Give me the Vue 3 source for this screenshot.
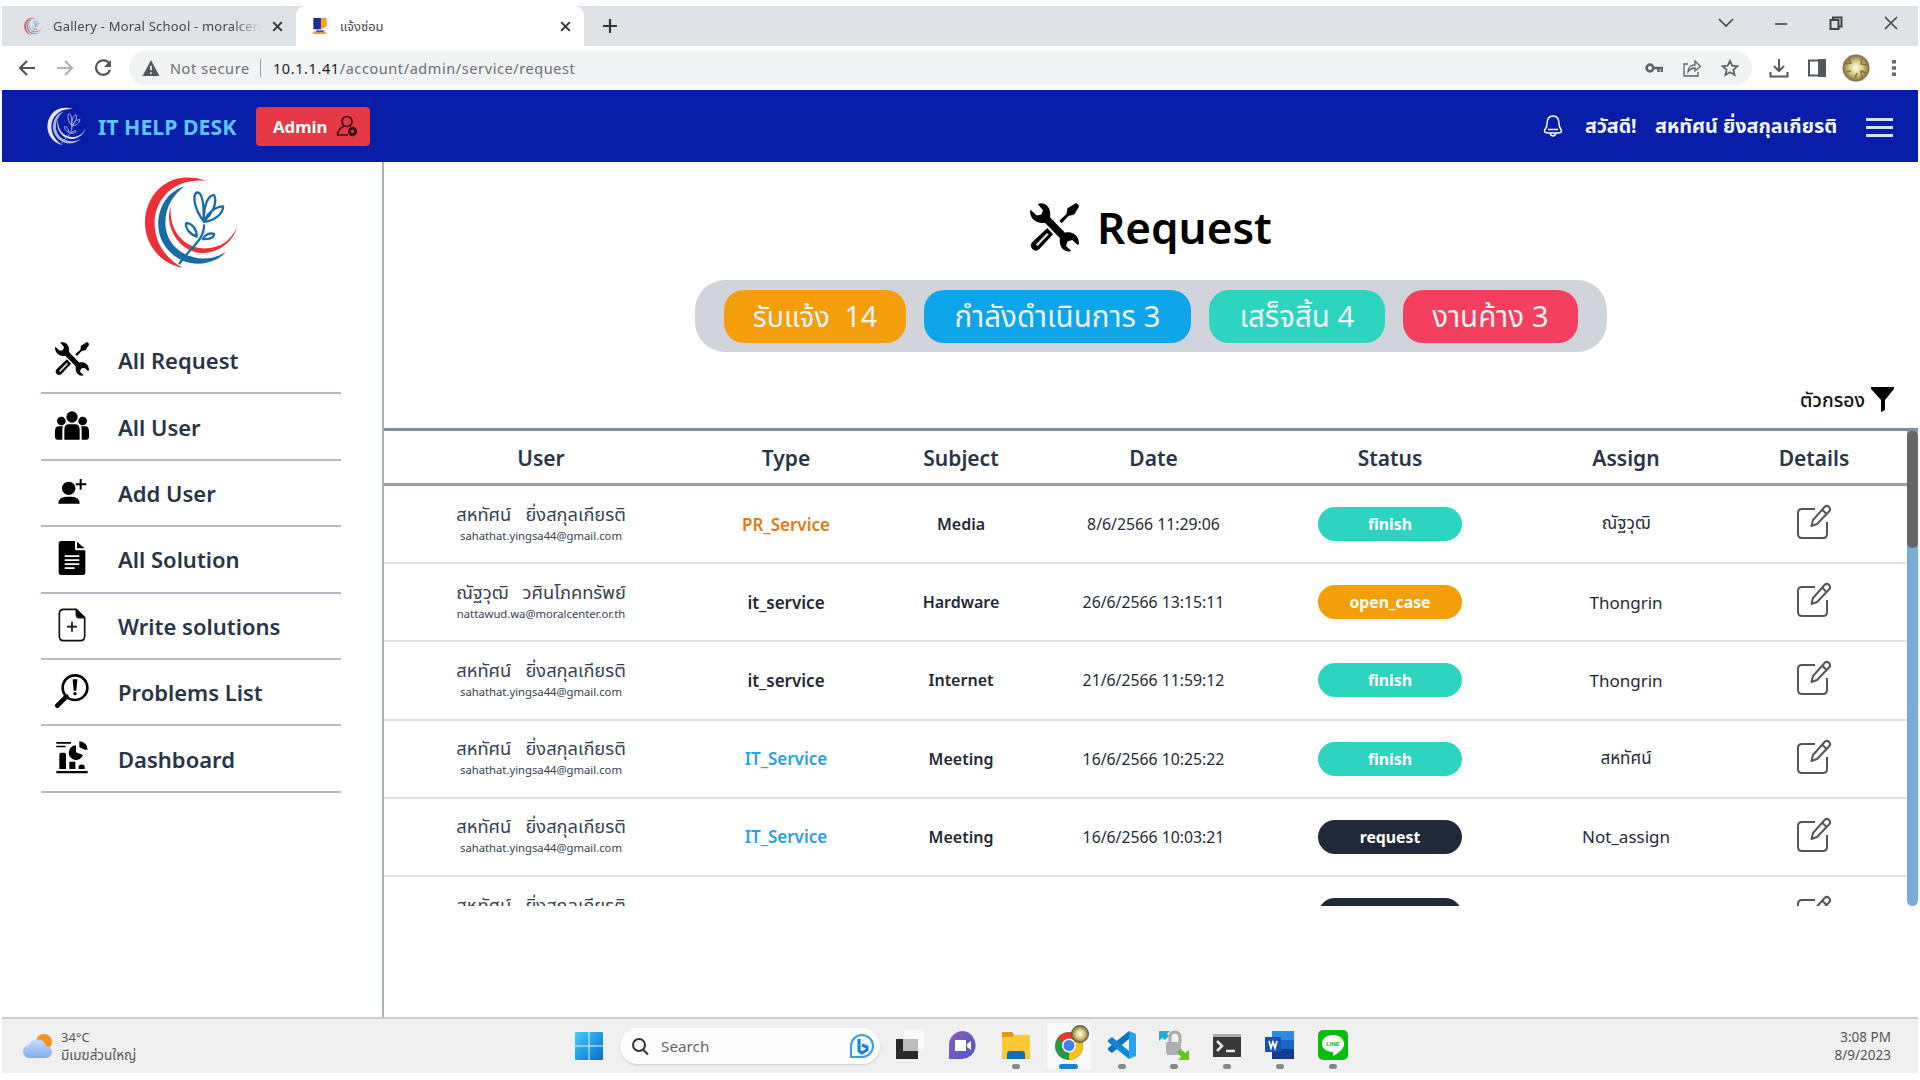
<script setup>
const menu = [
  { label: 'All Request', icon: 'tools' },
  { label: 'All User', icon: 'users' },
  { label: 'Add User', icon: 'useradd' },
  { label: 'All Solution', icon: 'file' },
  { label: 'Write solutions', icon: 'fileadd' },
  { label: 'Problems List', icon: 'problem' },
  { label: 'Dashboard', icon: 'dash' },
]
const counters = [
  { label: 'รับแจ้ง\u00a0 14', cls: 'amber' },
  { label: 'กำลังดำเนินการ 3', cls: 'sky' },
  { label: 'เสร็จสิ้น 4', cls: 'teal' },
  { label: 'งานค้าง 3', cls: 'rose' },
]
const columns = ['User', 'Type', 'Subject', 'Date', 'Status', 'Assign', 'Details']
const saha = { name: 'สหทัศน์\u00a0\u00a0 ยิ่งสกุลเกียรติ', mail: 'sahathat.yingsa44@gmail.com' }
const rows = [
  { ...saha, type: 'PR_Service', tc: 'pr', subject: 'Media', date: '8/6/2566 11:29:06', status: 'finish', assign: 'ณัฐวุฒิ' },
  { name: 'ณัฐวุฒิ\u00a0\u00a0 วศินโภคทรัพย์', mail: 'nattawud.wa@moralcenter.or.th', type: 'it_service', tc: 'plain', subject: 'Hardware', date: '26/6/2566 13:15:11', status: 'open_case', assign: 'Thongrin' },
  { ...saha, type: 'it_service', tc: 'plain', subject: 'Internet', date: '21/6/2566 11:59:12', status: 'finish', assign: 'Thongrin' },
  { ...saha, type: 'IT_Service', tc: 'it', subject: 'Meeting', date: '16/6/2566 10:25:22', status: 'finish', assign: 'สหทัศน์' },
  { ...saha, type: 'IT_Service', tc: 'it', subject: 'Meeting', date: '16/6/2566 10:03:21', status: 'request', assign: 'Not_assign' },
  { name: saha.name, mail: '', type: '', tc: 'it', subject: '', date: '', status: 'request', label: '', assign: '' },
]
</script>

<template>
  <svg class="sprite" aria-hidden="true">
    <symbol id="logo" viewBox="430 48 285 285">
      <path fill="var(--a)" d="M621 63C500 22 433 110 433 190c0 65 47 125 114 136C490 295 462 245 462 190 462 120 520 52 621 63z" />
      <path fill="var(--b)" d="M552 80c-52 15-79 65-79 115 0 65 57 120 122 119 40-1 70-19 84-36-29 19-59 22-84 19-55-7-100-47-100-107 0-50 25-85 57-110z" />
      <path fill="var(--a)" d="M511 140c-21 60 24 140 97 142 57-2 97-42 103-79-16 42-51 65-99 65-62-3-107-53-101-128z" />
      <g fill="none" stroke="var(--b)" stroke-width="7" stroke-linecap="round" stroke-linejoin="round">
        <path d="M611 186c-30-40-34-80-21-88 18-2 22 40 21 88zM612 186c-4-46 13-80 30-81 13 25-7 58-30 81zM613 187c8-28 36-47 57-47 0 25-28 43-57 47zM612 198c0 45-42 67-74 115" />
        <path d="M590 232c-20-6-36-26-32-41 17 0 32 18 32 41zM608 239c6-13 21-20 35-15-2 14-20 17-35 15z" />
      </g>
    </symbol>
    <symbol id="tools" viewBox="0 0 102 102">
      <path d="M16 2C30-3 42 8 42 22v8l31 32c14-4 27 4 29 20 0 2-1 4-2 6L88 77l-10 3-3 9 11 11c-12 4-24-6-24-20v-7L31 41C17 44 4 36 1 24c-1-4-1-7 0-10l13 12 10-2 3-9z" />
      <path d="M101 4l-5-4-18 11-2 12-15 14 5 5 14-15 12-3 10-16zM36 52l12 13-28 30q-8 8-15 1-7-8 1-16z" />
      <path d="M14 88l23-24" stroke="#ddd" stroke-width="5" fill="none" />
    </symbol>
    <symbol id="users" viewBox="0 0 102 102">
      <circle cx="51" cy="24" r="17" /><circle cx="19" cy="36" r="13" /><circle cx="83" cy="36" r="13" />
      <path d="M28 92V62q0-16 14-16h18q14 0 14 16v30zM22 92H8q-8 0-8-9V66q0-14 12-14h12q-2 4-2 10zM80 92h14q8 0 8-9V66q0-14-12-14H78q2 4 2 10z" />
    </symbol>
    <symbol id="useradd" viewBox="0 0 102 102">
      <circle cx="41" cy="40" r="20" /><path d="M10 86q0-21 25-21h14q25 0 25 21zM74 12h6v13h14v6H80v13h-6V31H62v-6h12z" />
    </symbol>
    <symbol id="file" viewBox="0 0 102 102">
      <path fill-rule="evenodd" d="M19 0h41v24q0 4 5 4h26v66q0 8-8 8H19q-8 0-8-8V8q0-8 8-8zM29 43v5h44v-5zm0 12v5h44v-5zm0 12v5h44v-5zm0 12v5h30v-5z" /><path d="M66 2l23 20H66z" />
    </symbol>
    <symbol id="fileadd" viewBox="0 0 102 102">
      <path d="M64 4H26Q13 4 13 17v67q0 14 13 14h50q13 0 13-14V29zM64 4v15q0 10 10 10h15" fill="none" stroke="#111" stroke-width="5" /><path d="M51 41v30M36 56h30" stroke="#111" stroke-width="5" /><path d="M65 6l22 21H72q-7 0-7-8z" />
    </symbol>
    <symbol id="problem" viewBox="0 0 102 102">
      <circle cx="60" cy="41" r="37" fill="none" stroke="#000" stroke-width="8" /><path d="M7 95l27-27" stroke="#000" stroke-width="14" stroke-linecap="round" /><path d="M53 16h14l-3 34h-8z" /><circle cx="60" cy="59" r="5" />
    </symbol>
    <symbol id="dash" viewBox="0 0 102 102">
      <path d="M4 3h44v5H4zM4 14h28v5H4zM4 90h94v7H4zM13 40q0-5 5-5h10q5 0 5 5v44H13zM43 62h18v22H43zM71 74q9-7 18 0v10H71z" /><path d="M63 13v21l21 8A22 22 0 1 1 63 13z" /><path d="M73 1q23 2 25 25H89L73 18z" />
    </symbol>
    <symbol id="edit" viewBox="0 0 36 36">
      <path d="M19 5H6Q2 5 2 9v21q0 4 4 4h21q4 0 4-4V18" fill="none" stroke="#555" stroke-width="2" /><path d="M29 2.500q2-1.500 4 .5t.5 4L21 20l-5.500 2 1.500-6zM26 5.500l4.500 4.500" fill="none" stroke="#555" stroke-width="2" stroke-linejoin="round" />
    </symbol>
    <linearGradient id="gw" x1="0" y1="0" x2="1" y2="1"><stop stop-color="#45cdf7" /><stop offset="1" stop-color="#0370cf" /></linearGradient>
    <linearGradient id="gc" x1="0" y1="0" x2="0" y2="1"><stop stop-color="#c9dcfb" /><stop offset="1" stop-color="#82acf0" /></linearGradient>
    <linearGradient id="gm" x1="0" y1="0" x2="1" y2="1"><stop stop-color="#8d62a8" /><stop offset="1" stop-color="#4b53d8" /></linearGradient>
    <radialGradient id="gp"><stop stop-color="#fffff0" /><stop offset=".5" stop-color="#d5ce83" /><stop offset="1" stop-color="#80653e" /></radialGradient>
  </svg>

  <div class="screen">
    <div class="tabs">
      <div class="tab first">
        <svg class="fav red"><use href="#logo" /></svg>
        <span class="tabtext">Gallery - Moral School - moralcen</span>
        <svg class="x" viewBox="0 0 12 12"><path d="M2 2l8 8M10 2l-8 8" /></svg>
      </div>
      <div class="tab active">
        <svg class="fav" viewBox="0 0 18 20"><path fill="#1d2c9e" d="M2 1h8v12H2z" /><path fill="#f6a01c" d="M10 1h6v9l-6 3z" /><path d="M3 15h11l2 3H1z" fill="#f0a04a" /><path d="M5 14h8v2H5z" fill="#4054b8" /></svg>
        <span class="tabtext thai">แจ้งซ่อม</span>
        <svg class="x" viewBox="0 0 12 12"><path d="M2 2l8 8M10 2l-8 8" /></svg>
      </div>
      <svg class="plus" viewBox="0 0 16 16"><path d="M8 1v14M1 8h14" /></svg>
      <div class="winbtns">
        <svg viewBox="0 0 16 16"><path d="M1 4l7 7 7-7" /></svg>
        <svg viewBox="0 0 16 16"><path d="M2 9h12" /></svg>
        <svg viewBox="0 0 16 16"><path d="M2.500 5h8v9h-8zM5 5V2.500h8.500v9H11" stroke-width="2" /></svg>
        <svg viewBox="0 0 16 16"><path d="M2 2l12 12M14 2L2 14" /></svg>
      </div>
    </div>

    <div class="toolbar">
      <svg class="nav" viewBox="0 0 18 18"><path d="M17 9H2M9 2L2 9l7 7" /></svg>
      <svg class="nav dim" viewBox="0 0 18 18"><path d="M1 9h15M9 2l7 7-7 7" /></svg>
      <svg class="nav" viewBox="0 0 18 18"><path d="M15.500 5A7.200 7.200 0 1 0 16 11" /><path d="M17 1v7h-7z" fill="#555" stroke="none" /></svg>
      <div class="omni">
        <svg class="warn" viewBox="0 0 18 17"><path d="M9 0l9 17H0z" fill="#55585c" /><path d="M9 6v5M9 13v2" stroke="#f1f3f4" stroke-width="1.800" /></svg>
        <span class="sec">Not secure</span><i></i>
        <span class="url"><b>10.1.1.41</b>/account/admin/service/request</span>
        <svg class="oi" viewBox="0 0 18 18"><circle cx="5" cy="9" r="3.400" stroke-width="2.600" /><path d="M8 9h9v4M13.500 9v4" stroke-width="2.600" /></svg>
        <svg class="oi" viewBox="0 0 18 18"><path d="M5 5H1v12h14v-4M5 13c0-5 3-7 7-7V2l5.500 5.500L12 12V9c-3 0-5 1-7 4z" /></svg>
        <svg class="oi" viewBox="0 0 18 18"><path d="M9 1.800l2.200 4.900 5.200.5-4 3.500 1.200 5.300L9 13.200 4.400 16l1.200-5.300-4-3.500 5.200-.5z" stroke-width="1.800" /></svg>
      </div>
      <svg class="ti" viewBox="0 0 20 20"><path d="M10 1v11M5 8l5 5 5-5M1.500 14v4.500h17V14" /></svg>
      <svg class="ti" viewBox="0 0 20 20"><path d="M2 2.500h16v15H2z" /><path d="M12 2h6v16h-6z" fill="#555" /></svg>
      <svg class="avatar" viewBox="0 0 28 28"><circle cx="14" cy="14" r="13.500" fill="url(#gp)" /><path d="M3 10l6-1-3-5M24 19l-5-2 1 7M4 18l5-1M20 5l-1 5 6 1M13 24l2-5" stroke="#8b7139" stroke-width="1.500" fill="none" /></svg>
      <svg class="dots" viewBox="0 0 6 18"><path d="M1 1h4v3.500H1zM1 7.300h4v3.500H1zM1 13.500h4V17H1z" /></svg>
    </div>

    <header>
      <svg class="hlogo"><use href="#logo" /></svg>
      <span class="brand">IT HELP DESK</span>
      <span class="admin">Admin
        <svg viewBox="0 0 22 22"><circle cx="11" cy="6.500" r="5" /><path d="M8 11c-4 2-6.500 4-6.500 9H12" /><circle cx="16.500" cy="16.500" r="3.200" stroke-width="3" /></svg>
      </span>
      <div class="grow"></div>
      <svg class="bell" viewBox="0 0 20 24"><path d="M10 2C5 2 4 7 4 10c0 4-2.500 5-2.500 7 0 2 2 2 8.500 2s8.500 0 8.500-2c0-2-2.500-3-2.500-7 0-3-1-8-6-8zM5 15.500h10M7 20q3 4 6 0" /></svg>
      <span class="hello">สวัสดี!</span>
      <span class="who">สหทัศน์ ยิ่งสกุลเกียรติ</span>
      <div class="burger"><i></i><i></i><i></i></div>
    </header>

    <div class="body">
      <aside>
        <svg class="biglogo"><use href="#logo" /></svg>
        <ul>
          <li v-for="m in menu" :key="m.label"><svg><use :href="'#' + m.icon" /></svg><span>{{ m.label }}</span></li>
        </ul>
      </aside>
      <main>
        <h1><svg><use href="#tools" /></svg><span>Request</span></h1>
        <div class="counters"><span v-for="c in counters" :key="c.cls" :class="c.cls"><em>{{ c.label }}</em></span></div>
        <div class="filter"><span>ตัวกรอง</span><svg viewBox="0 0 23 25"><path d="M0 0h23v2l-9 11v10l-4 2V13L0 2z" /></svg></div>
        <div class="tablewrap">
          <div class="table">
            <div class="row head"><span v-for="c in columns" :key="c">{{ c }}</span></div>
            <div v-for="(r, i) in rows" :key="i" class="row">
              <div class="user"><span>{{ r.name }}</span><small>{{ r.mail }}</small></div>
              <b :class="r.tc">{{ r.type }}</b>
              <b class="subj">{{ r.subject }}</b>
              <span class="date">{{ r.date }}</span>
              <span class="pill" :class="r.status">{{ r.label ?? r.status }}</span>
              <span class="assign">{{ r.assign }}</span>
              <svg class="edit"><use href="#edit" /></svg>
            </div>
          </div>
          <div class="scroll"><i></i></div>
        </div>
      </main>
    </div>

    <footer>
      <svg class="weather" viewBox="0 0 30 26"><circle cx="21" cy="9" r="8" fill="#f59320" /><path d="M7 25a6.500 6.500 0 0 1-1-13 9 9 0 0 1 17 1 6 6 0 0 1 0 12z" fill="url(#gc)" /></svg>
      <div class="wtext"><span>34°C</span><span class="wt">มีเมฆส่วนใหญ่</span></div>
      <svg class="win" viewBox="0 0 28 28"><path fill="url(#gw)" d="M1 0h12.500v13.500H0V1q0-1 1-1zM14.500 0H27q1 0 1 1v12.500H14.500zM0 14.500h13.500V28H1q-1 0-1-1zM14.500 14.500H28V27q0 1-1 1H14.500z" /></svg>
      <div class="search">
        <svg class="mag" viewBox="0 0 18 18"><circle cx="8" cy="8" r="6" /><path d="M12 12.500l5 5" /></svg>
        <span>Search</span>
        <svg class="bing" viewBox="0 0 26 26"><path d="M2 24V13A11 11 0 1 1 13 24z" fill="#eef8ff" stroke="#3f9be8" stroke-width="2" /><path d="M10 6v12l3 2 5-3v-3l-5-2" fill="none" stroke="#1b7fe0" stroke-width="3" /></svg>
      </div>
      <div class="apps">
        <div><svg viewBox="0 0 30 30"><path fill="#fafafa" d="M9 0h20v20H9z" /><path fill="#292929" d="M1 9h22v20H1z" /><path fill="#bdbdbd" d="M8 9h15v12H8z" /></svg></div>
        <div><svg viewBox="0 0 30 30"><path d="M15 1a14 14 0 1 1-3 28H1V15A14 14 0 0 1 15 1z" fill="url(#gm)" /><path fill="#fff" d="M7 10h11v11H7zM19 14l4-3v9l-4-3z" /></svg></div>
        <div><svg viewBox="0 0 30 30"><path fill="#dc9c0c" d="M1 2h10l3 4v4H1z" /><path fill="#fcc836" d="M1 5h28v24H1z" /><path fill="#dc9c0c" d="M1 2h10l2 3-2 2H1z" /><path fill="#0f6db9" d="M6 29v-5q0-3 3-3h12q3 0 3 3v5z" /></svg><i></i></div>
        <div class="on">
          <svg viewBox="0 0 30 30"><circle cx="15" cy="16" r="14" fill="#299947" /><path d="M15 16L3 9a14 14 0 0 1 24 0z" fill="#e33b2e" /><path d="M15 16l12-7A14 14 0 0 1 15 30z" fill="#fdc112" /><circle cx="15" cy="15.500" r="7" fill="#fff" /><circle cx="15" cy="15.500" r="5.500" fill="#3f7fee" /></svg>
          <svg class="badge" viewBox="0 0 18 18"><circle cx="9" cy="9" r="8.500" fill="url(#gp)" stroke="#675438" /></svg><i></i>
        </div>
        <div><svg viewBox="0 0 30 30"><path d="M22 1l7 3v22l-7 3z" fill="#28a2ed" /><path d="M22 1v8L5 23l-4-3v-2z" fill="#0b73bd" /><path d="M22 29v-8L5 7l-4 3v2z" fill="#1186d2" /></svg><i></i></div>
        <div><svg viewBox="0 0 30 30"><path d="M11 13V7q0-5 5-5 5 0 5 6v5" fill="none" stroke="#aaa" stroke-width="3" /><path d="M7 12h15v13H9q-2 0-2-3z" fill="#aeb1b3" /><path d="M0 1h11l-3 3 2 2-4 4-3-2-3 3z" fill="#23aed6" /><path d="M30 30H19l3-3-4-5 4-3 4 4 4-3z" fill="#68c51c" /></svg><i></i></div>
        <div><svg viewBox="0 0 30 30"><path fill="#383838" d="M1 4h28v23H1z" /><path fill="#aaa" d="M1 4h28v3H1z" /><path d="M5 11l5 5-5 5M14 21h9" fill="none" stroke="#e8e8e8" stroke-width="2.500" /></svg><i></i></div>
        <div><svg viewBox="0 0 30 30"><path fill="#2d8ae2" d="M7 1h22v9H7z" /><path fill="#1d65c5" d="M7 10h22v9H7z" /><path fill="#133c8e" d="M7 19h22v10H7z" /><path fill="#1853b4" d="M0 7h16v15H0z" /><path d="M4 11l2 7 2-6 2 6 2-7" fill="none" stroke="#fff" stroke-width="1.700" /></svg><i></i></div>
        <div><svg viewBox="0 0 30 30"><rect width="30" height="30" rx="5" fill="#06bd0b" /><path d="M15 5c7 0 11 4 11 9 0 6-8 10-11 12v-4C8 22 4 18 4 14c0-5 4-9 11-9z" fill="#fff" /><text x="15" y="16" text-anchor="middle" class="line">LINE</text></svg><i></i></div>
      </div>
      <div class="clock"><span>3:08 PM</span><span>8/9/2023</span></div>
    </footer>
  </div>
</template>

<style>
body { margin: 0; background: #fff; overflow: hidden; }
</style>

<style scoped>
* { box-sizing: border-box; }
.sprite { position: absolute; width: 0; height: 0; }
.screen { width: 1920px; height: 1080px; padding: 6px 2px 7px; display: flex; flex-direction: column; overflow: hidden; background: #fff; font-family: "Noto Sans", "Noto Sans Thai", sans-serif; color: #1f2937; }
svg { flex: none; display: block; }
.tabs { height: 40px; flex: none; background: #dee1e6; display: flex; align-items: center; }
.tab { height: 40px; display: flex; align-items: center; padding: 0 12px 0 20px; }
.first { width: 294px; padding-left: 22px; }
.active { width: 288px; background: #fff; border-radius: 9px 9px 0 0; padding-left: 15px; }
.fav { width: 18px; height: 19px; margin-right: 11px; }
.red { --a: #e35360; --b: #6f9ccc; }
.tabtext { flex: 1; font-size: 13px; color: #45494d; white-space: nowrap; overflow: hidden; }
.first .tabtext { letter-spacing: 0.2px; mask-image: linear-gradient(90deg, #000 86%, transparent); margin-right: 10px; }
.thai { font-size: 13px; line-height: 26px; }
.x { width: 13px; height: 13px; fill: none; stroke: #333; stroke-width: 1.8; }
.plus { width: 16px; height: 16px; margin-left: 18px; fill: none; stroke: #333; stroke-width: 2.2; }
.winbtns { margin-left: auto; display: flex; gap: 39px; padding: 0 19px 7px 0; }
.winbtns svg { width: 16px; height: 16px; fill: none; stroke: #444; stroke-width: 1.6; }
.toolbar { height: 44px; flex: none; display: flex; align-items: center; padding: 0 21px 0 16px; }
.nav { width: 18px; height: 18px; margin-right: 20px; fill: none; stroke: #555; stroke-width: 2.2; }
.nav.dim { stroke: #b3b3b3; }
.nav:nth-of-type(3) { margin-right: 17px; }
.omni { flex: 1; height: 34px; border-radius: 17px; background: #f1f3f4; display: flex; align-items: center; padding: 0 13px 0 13px; font-size: 14.5px; color: #6b6e72; white-space: nowrap; }
.warn { width: 18px; height: 16px; margin-right: 10px; }
.sec { width: 80px; letter-spacing: 0.6px; }
.omni i { width: 1px; height: 18px; background: #9a9da1; margin: 0 12px 0 10px; }
.url { flex: 1; letter-spacing: 0.58px; }
.url b { font-weight: 400; color: #222; }
.oi { width: 18px; height: 18px; margin-left: 20px; fill: none; stroke: #606468; stroke-width: 1.3; }
.ti { width: 20px; height: 20px; margin-left: 17px; fill: none; stroke: #555a60; stroke-width: 2; }
.ti + .ti { margin-left: 18px; }
.avatar { width: 28px; height: 28px; margin-left: 15px; }
.dots { width: 6px; height: 18px; margin-left: 21px; fill: #666; }
header { height: 72px; flex: none; background: #081ea9; display: flex; align-items: center; color: #f4f6ff; padding: 0 25px 0 45px; white-space: nowrap; }
.hlogo { width: 39px; height: 39px; --a: #e5e6f5; --b: #adb4e0; margin-right: 12px; }
.brand { width: 146px; font-size: 21.3px; font-weight: 700; color: #5fc4fb; padding-top: 1px; }
.admin { width: 114px; height: 39px; margin-left: 12px; border-radius: 4px; background: #e63946; color: #fff; font-weight: 700; font-size: 16.8px; display: flex; align-items: center; justify-content: space-between; padding: 0 12px 0 17px; }
.admin svg { width: 22px; height: 22px; fill: none; stroke: #35141c; stroke-width: 1.7; }
.grow { flex: 1; }
.bell { width: 20px; height: 24px; fill: none; stroke: #fff; stroke-width: 1.5; margin-right: 22px; }
.hello { width: 53px; font-size: 19.6px; font-weight: 700; margin-right: 17px; line-height: 30px; }
.who { width: 183px; font-size: 19.8px; font-weight: 700; margin-right: 28px; line-height: 30px; }
.burger { width: 27px; display: grid; gap: 5px; padding-top: 3px; }
.burger i { height: 3px; background: #d9def7; }
.body { flex: 1; display: flex; min-height: 0; }
aside { width: 382px; border-right: 2px solid #a9b1bf; }
.biglogo { width: 94px; height: 94px; margin: 14px 0 0 142px; --a: #ef2e38; --b: #196ba7; }
ul { list-style: none; margin: 58px 39px 0 39px; padding: 0; width: 300px; }
li { height: 66.42px; border-bottom: 2px solid #b3bac6; display: flex; align-items: center; padding-left: 14px; font-size: 22px; font-weight: 600; color: #293547; white-space: nowrap; }
li svg { width: 34px; height: 34px; margin: 0 29px 2px 0; }
main { flex: 1; min-width: 0; display: flex; flex-direction: column; }
h1 { margin: 35px 0 0 646px; height: 60px; display: flex; align-items: center; gap: 18px; font-size: 44px; line-height: 60px; font-weight: 600; color: #000; }
h1 svg { width: 49px; height: 49px; }
.counters { margin: 23px 0 0 311px; width: 912px; height: 72px; border-radius: 30px; background: #d1d5db; display: flex; align-items: center; gap: 18px; padding-left: 29px; }
.counters span { height: 53px; border-radius: 20px; color: #eef2f5; font-size: 29.5px; line-height: 50px; display: flex; align-items: center; justify-content: center; white-space: nowrap; }
em { font-style: normal; }
.counters .amber { width: 182px; background: #f59e0b; font-size: 28.5px; }
.sky { width: 267px; background: #0ea5e9; }
.teal { width: 176px; background: #2dd4bf; }
.rose { width: 175px; background: #f43f5e; }
.filter { height: 76px; padding: 19px 24px 0 0; display: flex; align-items: center; justify-content: flex-end; gap: 6px; font-size: 19.3px; line-height: 28px; font-weight: 500; color: #111; }
.filter svg { width: 23px; height: 25px; }
.tablewrap { height: 478px; border-top: 3px solid #858d9a; display: flex; }
.table { flex: 1; overflow: hidden; }
.row { height: 78.2px; border-bottom: 2px solid #dfe2e7; display: grid; grid-template-columns: 314px 176px 174px 211px 262px 210px 166px; align-items: center; justify-items: center; font-size: 17px; white-space: nowrap; }
.head { height: 55px; padding-top: 2px; border-bottom: 3px solid #9ca3af; font-size: 21px; font-weight: 600; color: #293547; }
.user { display: flex; flex-direction: column; align-items: center; color: #374151; padding-bottom: 1px; }
.user span { font-size: 18.3px; line-height: 24px; }
.user small { font-size: 11.25px; line-height: 20px; min-height: 20px; }
.row b { font-size: 17px; font-weight: 600; }
.row b.subj { font-size: 16px; }
.pr { color: #dc7b16; }
.it { color: #28a1e8; }
.date { font-size: 15.8px; }
.pill { width: 144px; height: 34px; border-radius: 17px; color: #fff; font-weight: 700; font-size: 15.8px; display: flex; align-items: center; justify-content: center; }
.finish { background: #2dd4bf; }
.open_case { background: #f59e0b; }
.request { background: #1f2937; }
.edit { width: 36px; height: 36px; margin-bottom: 4px; }
.scroll { width: 11px; background: #78acd6; border-radius: 0 0 6px 6px; }
.scroll i { display: block; height: 117px; background: #666; border-radius: 5px; }
footer { height: 56px; flex: none; background: #f0f0f0; border-top: 2px solid #ccc; display: flex; align-items: center; padding-left: 21px; font-size: 13px; color: #555; white-space: nowrap; }
.weather { width: 30px; height: 26px; }
.wtext { width: 514px; margin-left: 8px; display: flex; flex-direction: column; line-height: 18px; }
.wt { font-size: 13.5px; }
.win { width: 28px; height: 28px; }
.search { width: 260px; height: 36px; margin-left: 17px; border-radius: 18px; background: #fcfcfc; box-shadow: 0 1px 2px #ccc; display: flex; align-items: center; padding: 0 5px 0 11px; font-size: 15.3px; color: #666; }
.mag { width: 18px; height: 18px; fill: none; stroke: #333; stroke-width: 2; }
.search span { flex: 1; margin-left: 12px; }
.bing { width: 26px; height: 26px; }
.apps { display: flex; align-items: center; height: 100%; margin-left: 4px; }
.apps div { width: 52.8px; height: 54px; display: flex; justify-content: center; align-items: center; position: relative; padding-bottom: 2px; }
.apps > div > svg { width: 30px; height: 30px; }
.apps div i { position: absolute; bottom: 4px; width: 8px; height: 5px; border-radius: 3px; background: #888; }
.apps .on { background: linear-gradient(#f9f9f9, #f9f9f9) center 4px / 44px 46px no-repeat; }
.apps .on i { width: 19px; background: #1b80d8; }
.apps > div > svg.badge { position: absolute; width: 18px; height: 18px; right: 6px; top: 6px; }
.line { font: 700 6px "Liberation Sans", sans-serif; fill: #06bd0b; }
.clock { margin-left: auto; padding-right: 27px; display: flex; flex-direction: column; text-align: right; line-height: 18px; font-size: 13.5px; }
</style>
